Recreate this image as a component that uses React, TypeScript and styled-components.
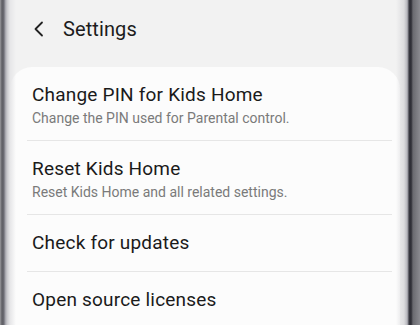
import React from 'react';
import styled, { createGlobalStyle } from 'styled-components';

const GlobalStyle = createGlobalStyle`
  html, body {
    margin: 0;
    padding: 0;
    background: #f2f2f2;
  }
  body {
    font-family: Roboto, "Noto Sans", "Liberation Sans", sans-serif;
    -webkit-font-smoothing: antialiased;
  }
`;

type Item = {
  title: string;
  summary?: string;
};

const items: Item[] = [
  { title: 'Change PIN for Kids Home', summary: 'Change the PIN used for Parental control.' },
  { title: 'Reset Kids Home', summary: 'Reset Kids Home and all related settings.' },
  { title: 'Check for updates' },
  { title: 'Open source licenses' },
];

const App: React.FC = () => (
  <>
    <GlobalStyle />
    <Phone>
      <Screen>
        <Header>
          <BackButton aria-label="Back">
            <svg width="12" height="16" viewBox="0 0 12 16" fill="none">
              <path d="M9 1.5 L2.5 8 L9 14.5" stroke="#222" strokeWidth="1.8" strokeLinecap="round" strokeLinejoin="round" />
            </svg>
          </BackButton>
          <Title>Settings</Title>
        </Header>
        <Card>
          {items.map((item, i) => (
            <Row key={item.title} $first={i === 0} $withSummary={!!item.summary}>
              <RowTitle>{item.title}</RowTitle>
              {item.summary && <RowSummary>{item.summary}</RowSummary>}
            </Row>
          ))}
        </Card>
      </Screen>
    </Phone>
  </>
);

export default App;

const Phone = styled.div`
  position: relative;
  width: 420px;
  height: 325px;
  overflow: hidden;
  background: #f2f2f2;

  /* curved screen edges and bezel */
  &::before,
  &::after {
    content: '';
    position: absolute;
    top: 0;
    bottom: 0;
    pointer-events: none;
    z-index: 2;
  }

  &::before {
    left: 0;
    width: 16px;
    background: linear-gradient(
      to right,
      #9a9a9e 0px,
      #5e5e64 2px,
      #6c6c74 4px,
      #9c9ca4 5px,
      #c8c8cc 7px,
      #e6e6e8 10px,
      rgba(242, 242, 242, 0) 16px
    );
  }

  &::after {
    right: 0;
    width: 24px;
    background: linear-gradient(
      to right,
      rgba(242, 242, 242, 0) 0px,
      rgba(215, 215, 218, 0.8) 8px,
      #b8b8be 11px,
      #8c8c94 12px,
      #3a3a42 13px,
      #2c2c34 15px,
      #6a6a70 17px,
      #8a8a90 24px
    );
  }
`;

const Screen = styled.div`
  display: flex;
  flex-direction: column;
  height: 100%;
`;

const Header = styled.div`
  display: flex;
  align-items: center;
  height: 58px;
  padding: 0 0 0 33px;
  flex-shrink: 0;
`;

const BackButton = styled.div`
  display: flex;
  align-items: center;
  justify-content: center;
  width: 12px;
  height: 16px;
  margin-right: 18px;
`;

const Title = styled.div`
  font-size: 20px;
  color: #1c1c1c;
  letter-spacing: 0.1px;
`;

const Card = styled.div`
  flex: 1;
  margin: 9px 20px 0 10px;
  padding: 0 8px 0 17px;
  background: #fcfcfc;
  border-radius: 22px 22px 0 0;
`;

const Row = styled.div<{ $first: boolean; $withSummary: boolean }>`
  display: flex;
  flex-direction: column;
  padding: ${({ $withSummary }) => ($withSummary ? '16px 5px 13px' : '16px 5px 16px')};
  border-top: ${({ $first }) => ($first ? 'none' : '1px solid #e6e6e6')};
`;

const RowTitle = styled.div`
  font-size: 19px;
  line-height: 24px;
  letter-spacing: 0.2px;
  color: #1a1a1a;
`;

const RowSummary = styled.div`
  margin-top: 2px;
  font-size: 14px;
  line-height: 18px;
  color: #7a7a7a;
`;
